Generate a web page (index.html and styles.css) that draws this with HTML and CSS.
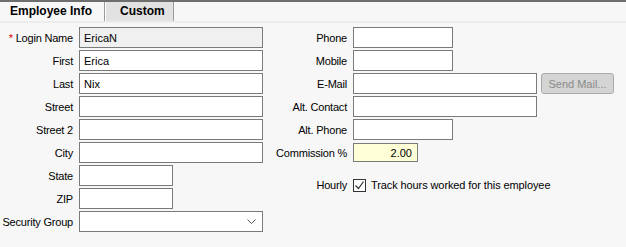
FILE: index.html
```html
<!DOCTYPE html>
<html lang="en">
<head>
    <meta charset="UTF-8">
    <title>Employee Info</title>
    <link rel="stylesheet" href="styles.css">
</head>
<body>
    <div class="tabs">
        <div class="tab active">Employee Info</div>
        <div class="tab">Custom</div>
    </div>

    <div class="form">
        <div class="col left">
            <div class="row"><label><span class="req">*</span>&nbsp;Login Name</label><input class="field wide readonly" value="EricaN" readonly></div>
            <div class="row"><label>First</label><input class="field wide" value="Erica"></div>
            <div class="row"><label>Last</label><input class="field wide" value="Nix"></div>
            <div class="row"><label>Street</label><input class="field wide"></div>
            <div class="row"><label>Street 2</label><input class="field wide"></div>
            <div class="row"><label>City</label><input class="field wide"></div>
            <div class="row"><label>State</label><input class="field short"></div>
            <div class="row"><label>ZIP</label><input class="field short"></div>
            <div class="row"><label>Security Group</label>
                <div class="field wide select">
                    <svg width="9" height="6" viewBox="0 0 9 6"><path d="M0.5 0.5 L4.5 4.5 L8.5 0.5" fill="none" stroke="#555" stroke-width="1"/></svg>
                </div>
            </div>
        </div>

        <div class="col right">
            <div class="row"><label>Phone</label><input class="field phone"></div>
            <div class="row"><label>Mobile</label><input class="field phone"></div>
            <div class="row"><label>E-Mail</label><input class="field mail"><button class="btn" disabled>Send Mail...</button></div>
            <div class="row"><label>Alt. Contact</label><input class="field mail"></div>
            <div class="row"><label>Alt. Phone</label><input class="field phone"></div>
            <div class="row"><label>Commission %</label><input class="field pct" value="2.00"></div>
            <div class="row check-row"><label>Hourly</label>
                <span class="check">
                    <svg width="11" height="11" viewBox="0 0 11 11"><path d="M1.5 5.5 L4.5 8.5 L9.5 1.5" fill="none" stroke="#333" stroke-width="1.2"/></svg>
                </span>
                <span class="check-text">Track hours worked for this employee</span>
            </div>
        </div>
    </div>
</body>
</html>
```

FILE: styles.css
```css
body {
    margin: 0;
    background: #f7f7f7;
    font-family: "Liberation Sans", sans-serif;
    font-size: 11px;
    color: #000;
    border-top: 2px solid #6e6e6e;
    height: 245px;
    overflow: hidden;
}
.tabs {
    display: flex;
    height: 19px;
    border-bottom: 2px solid #ececec;
}
.tab {
    font-weight: bold;
    font-size: 12px;
    line-height: 19px;
    border-right: 1px solid #9a9a9a;
    white-space: nowrap;
}
.tab.active { width: 94px; padding-left: 10px; background: #f7f7f7; }
.tab:not(.active) { width: 53px; padding-left: 14px; background: #e2e2e2; border-left: 1px solid #fff; }

.form { display: flex; padding-top: 4px; }
.col.left { width: 263px; }
.row {
    display: flex;
    align-items: center;
    height: 21px;
    margin-bottom: 2px;
}
label {
    flex: none;
    display: flex;
    justify-content: flex-end;
    white-space: nowrap;
    margin-right: 6px;
    letter-spacing: -0.2px;
}
.left label { width: 73px; }
.right label { width: 84px; }
.req { color: #d40000; }

.field {
    box-sizing: border-box;
    height: 21px;
    border: 1px solid #7a7a7a;
    background: #fff;
    font-family: "Liberation Sans", sans-serif;
    font-size: 11px;
    padding: 0 4px;
    margin: 0;
    outline: none;
}
.wide { width: 184px; }
.short { width: 94px; }
.phone { width: 100px; }
.mail { width: 184px; }
.pct { width: 65px; height: 19px; text-align: right; background: #ffffd8; padding-right: 5px; }
.readonly { background: #f0f0f0; }
.select { display: flex; align-items: center; justify-content: flex-end; padding-right: 6px; }

.btn {
    box-sizing: border-box;
    margin-left: 4px;
    width: 73px;
    height: 21px;
    border: 1px solid #aaa;
    border-radius: 3px;
    background: #d4d4d4;
    color: #8a8a8a;
    font-family: "Liberation Sans", sans-serif;
    font-size: 11px;
    padding: 0;
}

.check-row { margin-top: 13px; height: 18px; }
.check {
    box-sizing: border-box;
    width: 13px;
    height: 13px;
    border: 1px solid #333;
    background: #fff;
    display: flex;
    align-items: center;
    justify-content: center;
    margin-right: 5px;
}
.check-text { letter-spacing: -0.1px; }
```
